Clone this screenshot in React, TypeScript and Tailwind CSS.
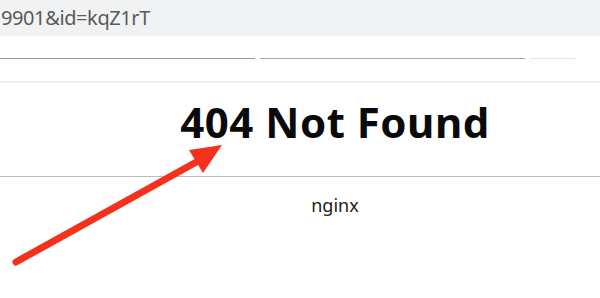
export default function App() {
  return (
    <div className="relative h-[298px] w-[600px] overflow-hidden bg-white font-['Noto_Sans',sans-serif]">
      <div className="flex h-[36px] items-center bg-[#f1f2f4] pl-[1px]">
        <span className="text-[20px] leading-none tracking-[-0.4px] text-[#5a5a5a]">9901&amp;id=kqZ1rT</span>
      </div>
      <div className="flex h-[47px] items-center border-b-2 border-[#f0f0f0]">
        <div className="flex w-full items-center gap-[5px]">
          <div className="h-[1px] w-[255px] bg-[#9a9a9a]" />
          <div className="h-[1px] w-[265px] bg-[#a8a8a8]" />
          <div className="h-[1px] w-[45px] bg-[#e4e4e4]" />
        </div>
      </div>
      <div className="w-[670px]">
        <h1 className="mt-[11px] text-center text-[42px] font-bold leading-[56px] tracking-[0.5px] text-[#0a0a0a]">404 Not Found</h1>
        <div className="mt-[26px] h-[1px] w-full bg-[#bcbcbc]" />
        <p className="mt-[16px] text-center text-[18px] leading-[24px] text-[#222]">nginx</p>
      </div>
      <svg className="absolute left-0 top-0" width="600" height="298" viewBox="0 0 600 298">
        <line x1="16" y1="262" x2="200" y2="160" stroke="#f5301d" strokeWidth="7" strokeLinecap="round" />
        <polygon points="189,150 222,145 203,173" fill="#f5301d" />
      </svg>
    </div>
  );
}
